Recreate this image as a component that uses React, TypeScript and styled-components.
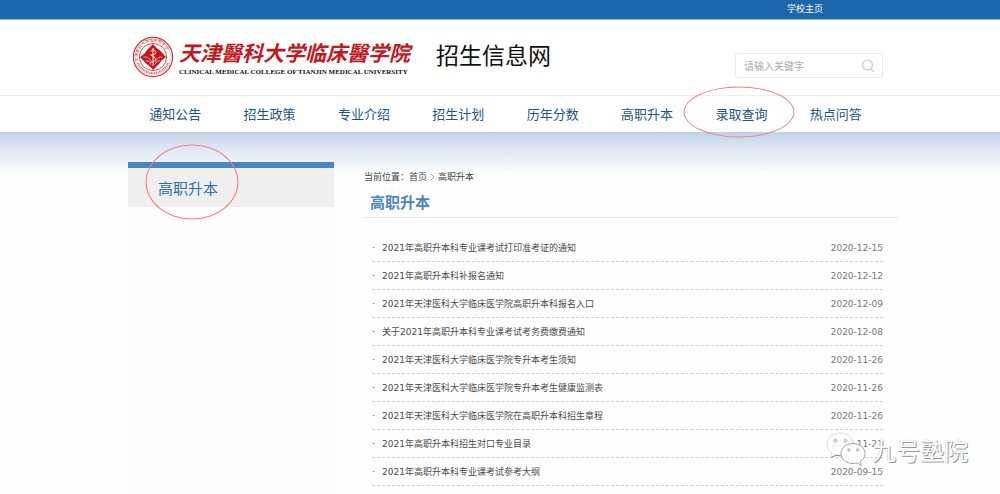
import React from "react";
import styled, { createGlobalStyle, css } from "styled-components";

const CJK = `"Noto Sans CJK SC", sans-serif`;

const GlobalStyle = createGlobalStyle`
  * { box-sizing: border-box; }
  body {
    margin: 0;
    background: #fefefe;
    color: #4c4c4c;
    font-family: "Open Sans", ${CJK};
    font-size: 9px;
  }
  a { color: inherit; text-decoration: none; }
  ul { list-style: none; margin: 0; padding: 0; }
  h1, h2, p { margin: 0; font-weight: 400; }
`;

const Page = styled.div`
  position: relative;
  min-height: 100vh;
  overflow: hidden;
  display: flex;
  flex-direction: column;
`;

const gutters = css`
  padding-left: 128px;
  padding-right: 117px;
`;

const TopBar = styled.div`
  ${gutters}
  display: flex;
  justify-content: flex-end;
  height: 20px;
  background: #1c66ab;
  border-bottom: 1px solid #8fb4dc;
  color: #fff;
  line-height: 18px;
`;

const TopLink = styled.a`
  margin-right: 60px;
`;

const Header = styled.header`
  ${gutters}
  display: flex;
  align-items: flex-start;
  height: 76px;
  background: #fff;
  border-bottom: 1px solid #eee;
`;

const Brand = styled.a`
  display: flex;
  gap: 5px;
  padding: 16px 0 0 4px;
`;

const BrandText = styled.div`
  display: flex;
  flex-direction: column;
  padding-top: 1px;
`;

const BrandName = styled.span`
  font: italic 700 21px/30px ${CJK};
  color: #c2191f;
  white-space: nowrap;
`;

const BrandCaption = styled.span`
  font: 700 7px/10px "Liberation Serif", serif;
  color: #111;
  white-space: nowrap;
`;

const SiteTitle = styled.h1`
  margin-left: 26px;
  padding-top: 17px;
  font: 400 23px/34px ${CJK};
  color: #111;
  white-space: nowrap;
`;

const Search = styled.form`
  display: flex;
  align-items: center;
  width: 148px;
  height: 25px;
  margin: 33px 0 0 auto;
  padding: 0 7px 0 8px;
  border: 1px solid #eaeaea;
  border-radius: 3px;
  background: #fff;
`;

const SearchInput = styled.input`
  flex: 1;
  min-width: 0;
  padding: 0;
  border: 0;
  outline: 0;
  background: none;
  font: 400 10px/20px ${CJK};
  color: #555;
  &::placeholder { color: #aaa; opacity: 1; }
`;

const SearchButton = styled.button`
  display: flex;
  padding: 0;
  border: 0;
  background: none;
  color: #ccc;
`;

const Nav = styled.nav`
  ${gutters}
  display: grid;
  grid-template-columns: repeat(8, 1fr);
  height: 36px;
  background: #fff;
`;

const NavLink = styled.a`
  position: relative;
  text-align: center;
  font: 400 13px/36px ${CJK};
  color: #1d5585;
  white-space: nowrap;
`;

const Ring = styled.span<{ $w: number; $h: number; $x: number; $y: number }>`
  position: absolute;
  z-index: 2;
  top: ${(p) => p.$y}%;
  left: ${(p) => p.$x}%;
  width: ${(p) => p.$w}px;
  height: ${(p) => p.$h}px;
  transform: translate(-50%, -50%);
  border: 1px solid #f47c7c;
  border-radius: 50%;
  pointer-events: none;
`;

const Main = styled.main`
  ${gutters}
  flex: 1;
  display: flex;
  gap: 30px;
  padding-top: 30px;
  background: linear-gradient(#bfd1ea, #dde7f4 16px, #fefefe 42px);
`;

const Sidebar = styled.aside`
  flex: 0 0 206px;
  background: #fcfcfc;
`;

const SideLink = styled.a`
  display: block;
  height: 45px;
  padding-left: 30px;
  border-top: 6px solid #4686c6;
  background: #efefef;
  font: 400 15px/39px ${CJK};
  color: #2f6fb0;
`;

const SideLabel = styled.span`
  position: relative;
  display: inline-block;
`;

const Content = styled.section`
  flex: 1;
  min-width: 0;
  padding-top: 6px;
`;

const Crumbs = styled.nav`
  display: flex;
  align-items: center;
  font: 400 9px/18px ${CJK};
  color: #444;
`;

const CrumbArrow = styled.svg`
  margin: 0 3px;
`;

const SectionTitle = styled.h2`
  height: 32px;
  margin-right: -15px;
  padding-left: 6px;
  border-bottom: 1px solid #e9e9e9;
  font: 700 15px/32px ${CJK};
  color: #4686c6;
`;

const List = styled.ul`
  padding: 16px 0 8px 8px;
`;

const Item = styled.li`
  display: flex;
  align-items: center;
  height: 28px;
  border-bottom: 1px dashed #d0d0d0;
  font: 400 9px/28px "DejaVu Sans", ${CJK};
`;

const Dot = styled.span`
  width: 10px;
`;

const ItemLink = styled.a`
  flex: 1;
`;

const ItemDate = styled.time`
  color: #777;
`;

const Watermark = styled.div`
  position: absolute;
  top: 432px;
  right: 32px;
  display: flex;
  align-items: center;
  gap: 5px;
  font: 400 24px/36px ${CJK};
  color: #fff;
  text-shadow: 1px 1px 0 #999, 0 0 1px #aaa;
`;

const Seal = () => (
  <svg width="42" height="42" viewBox="0 0 42 42" aria-hidden="true">
    <defs>
      <path id="arcTop" d="M6.6 25a15 15 0 1 1 28.8 0" />
    </defs>
    <circle cx="21" cy="21" r="19.6" fill="#fff" stroke="#c9383c" strokeWidth="1.2" />
    <circle cx="21" cy="21" r="18" fill="none" stroke="#dd8888" strokeWidth=".5" />
    <text fontSize="4" fontFamily="Noto Sans CJK SC" fill="#c9383c">
      <textPath href="#arcTop">天津医科大学临床医学院</textPath>
    </text>
    <path d="M6 27a16.2 16.2 0 0 0 30 0" fill="none" stroke="#d66" strokeWidth="2" strokeDasharray="1 .7" />
    <circle cx="21" cy="21" r="13.6" fill="#fff" stroke="#c9383c" strokeWidth=".9" />
    <path d="M21 8 Q24 12 28 14.500 L34 21 Q29 24 27 28 L21 34 Q18 30 14 27.500 L8 21 Q13 18 15 14Z" fill="#c4161c" />
    <path d="M21 12v18M18.6 15.2q2.4-3 4.8 0t-4.8 4q4.8 1 4.8 4t-4.8 3" fill="none" stroke="#fff" strokeWidth=".9" />
    <path d="M11.5 21q5-.6 7.5 4.500M30.500 21q-5-.6-7.500 4.500M14 24.500q4 0 5 4M28 24.500q-4 0-5 4" fill="none" stroke="#f3c4c4" strokeWidth=".8" />
  </svg>
);

const SearchIcon = () => (
  <svg width="14" height="14" viewBox="0 0 14 14" fill="none" stroke="currentColor" strokeWidth="1.2" aria-hidden="true">
    <circle cx="6.500" cy="6" r="5" />
    <path d="M10 9.800 12.800 12.800" />
  </svg>
);

const ChatIcon = () => (
  <svg width="41" height="36" viewBox="0 0 41 36" aria-hidden="true">
    <path
      d="M14 1C6.800 1 1 5.800 1 12c0 3.700 2 6.800 5 8.900L5 25.500l5-2.600c1.300.4 2.600.6 4 .6 7.200 0 13-5 13-11.500S21.200 1 14 1Z"
      fill="#fff" fillOpacity=".88" stroke="#ccc" strokeWidth=".7"
    />
    <path d="M5 25.800l5-2.600c1.300.4 3 .6 4.500.5" fill="none" stroke="#888" />
    <path
      d="M27 11.500c-6.600 0-12 4.500-12 10s5.400 10 12 10c1.500 0 3-.2 4.200-.6l4.200 2.500-1-4C37.300 27.500 39 24.700 39 21.500c0-5.500-5.400-10-12-10Z"
      fill="#fff" stroke="#999" strokeWidth=".9"
    />
    <g fill="#ddd" stroke="#aaa" strokeWidth=".8">
      <circle cx="9.500" cy="8.500" r="1.500" />
      <circle cx="19.500" cy="8.500" r="1.500" />
      <circle cx="23" cy="18" r="1.200" />
      <circle cx="31.500" cy="18" r="1.200" />
    </g>
  </svg>
);

const navItems = ["通知公告", "招生政策", "专业介绍", "招生计划", "历年分数", "高职升本", "录取查询", "热点问答"];

const notices: [string, string][] = [
  ["2021年高职升本科专业课考试打印准考证的通知", "2020-12-15"],
  ["2021年高职升本科补报名通知", "2020-12-12"],
  ["2021年天津医科大学临床医学院高职升本科报名入口", "2020-12-09"],
  ["关于2021年高职升本科专业课考试考务费缴费通知", "2020-12-08"],
  ["2021年天津医科大学临床医学院专升本考生须知", "2020-11-26"],
  ["2021年天津医科大学临床医学院专升本考生健康监测表", "2020-11-26"],
  ["2021年天津医科大学临床医学院在高职升本科招生章程", "2020-11-26"],
  ["2021年高职升本科招生对口专业目录", "2020-11-21"],
  ["2021年高职升本科专业课考试参考大纲", "2020-09-15"],
];

export default function App() {
  return (
    <Page lang="zh-CN">
      <GlobalStyle />
      <TopBar>
        <TopLink href="#">学校主页</TopLink>
      </TopBar>
      <Header>
        <Brand href="#">
          <Seal />
          <BrandText>
            <BrandName>天津醫科大学临床醫学院</BrandName>
            <BrandCaption>CLINICAL MEDICAL COLLEGE OF TIANJIN MEDICAL UNIVERSITY</BrandCaption>
          </BrandText>
        </Brand>
        <SiteTitle>招生信息网</SiteTitle>
        <Search onSubmit={(e) => e.preventDefault()}>
          <SearchInput type="text" placeholder="请输入关键字" aria-label="请输入关键字" />
          <SearchButton type="submit" aria-label="搜索">
            <SearchIcon />
          </SearchButton>
        </Search>
      </Header>
      <Nav>
        {navItems.map((name) => (
          <NavLink key={name} href="#">
            {name}
            {name === "录取查询" && <Ring $w={111} $h={51} $x={47} $y={44} />}
          </NavLink>
        ))}
      </Nav>
      <Main>
        <Sidebar>
          <SideLink href="#">
            <SideLabel>
              高职升本
              <Ring $w={93} $h={75} $x={57} $y={35} />
            </SideLabel>
          </SideLink>
        </Sidebar>
        <Content>
          <Crumbs>
            <span>当前位置：</span>
            <a href="#">首页</a>
            <CrumbArrow width="5" height="8" viewBox="0 0 5 8" fill="none" stroke="#888" strokeWidth=".8" aria-hidden="true">
              <path d="M.8.8 4 4 .8 7.200" />
            </CrumbArrow>
            <a href="#">高职升本</a>
          </Crumbs>
          <SectionTitle>高职升本</SectionTitle>
          <List>
            {notices.map(([title, date]) => (
              <Item key={title}>
                <Dot>·</Dot>
                <ItemLink href="#">{title}</ItemLink>
                <ItemDate dateTime={date}>{date}</ItemDate>
              </Item>
            ))}
          </List>
        </Content>
      </Main>
      <Watermark>
        <ChatIcon />
        <span>九号塾院</span>
      </Watermark>
    </Page>
  );
}
